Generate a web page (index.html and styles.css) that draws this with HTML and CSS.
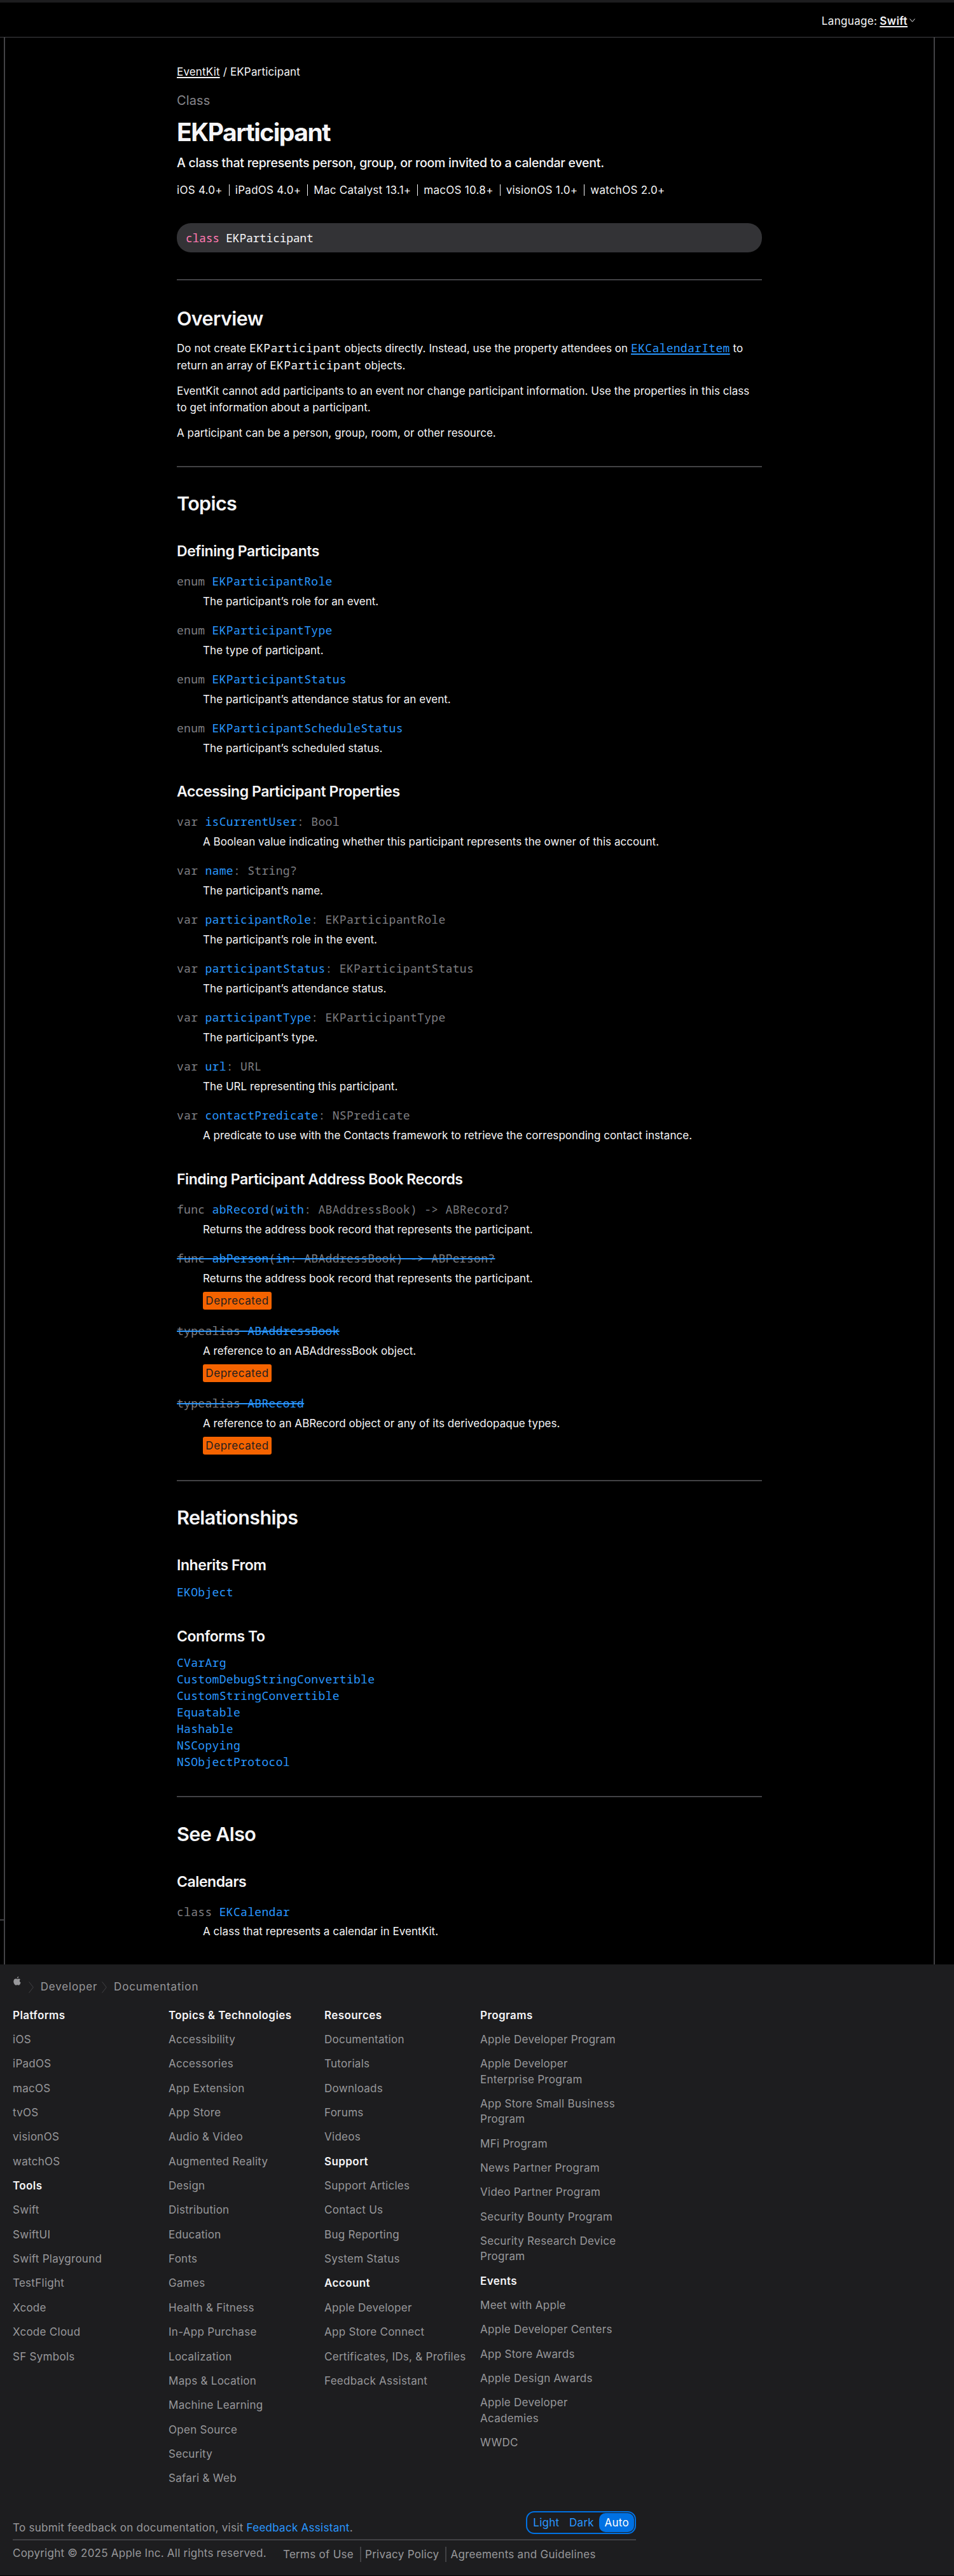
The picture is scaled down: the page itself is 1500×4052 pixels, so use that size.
FILE: index.html
```
<!DOCTYPE html>
<html lang="en">
<head>
<meta charset="utf-8">
<title>EKParticipant | Apple Developer Documentation</title>
<link rel="stylesheet" href="styles.css">
</head>
<body>
<header class="nav">
  <div class="nav-setting">
    <span class="nav-label">Language:</span>
    <a class="nav-value">Swift</a>
    <svg class="nav-chevron" width="9" height="6" viewBox="0 0 9 6"><path d="M.5 .6 4.5 5.2 8.5 .6" fill="none" stroke="#f5f5f7" stroke-width="1"/></svg>
  </div>
</header>

<div class="shell">
  <div class="rail rail-left"><div class="rail-tick"></div></div>
  <main class="doc">
    <nav class="crumbs"><a class="crumb-link">EventKit</a> / EKParticipant</nav>
    <p class="eyebrow">Class</p>
    <h1 class="title">EKParticipant</h1>
    <p class="abstract">A class that represents person, group, or room invited to a calendar event.</p>
    <ul class="platforms">
      <li>iOS 4.0+</li><li>iPadOS 4.0+</li><li>Mac Catalyst 13.1+</li><li>macOS 10.8+</li><li>visionOS 1.0+</li><li>watchOS 2.0+</li>
    </ul>
    <div class="declaration"><span class="keyword">class</span> EKParticipant</div>

    <section class="section section-overview">
      <h2>Overview</h2>
      <div class="prose">
        <p>Do not create <code>EKParticipant</code> objects directly. Instead, use the property attendees on <a class="inline-link"><code>EKCalendarItem</code></a> to<br>return an array of <code>EKParticipant</code> objects.</p>
        <p>EventKit cannot add participants to an event nor change participant information. Use the properties in this class<br>to get information about a participant.</p>
        <p>A participant can be a person, group, room, or other resource.</p>
      </div>
    </section>

    <section class="section section-topics">
      <h2>Topics</h2>
      <div class="group">
        <h3>Defining Participants</h3>
        <div class="symbols">
          <div class="symbol"><div class="sig">enum <a>EKParticipantRole</a></div><p>The participant’s role for an event.</p></div>
          <div class="symbol"><div class="sig">enum <a>EKParticipantType</a></div><p>The type of participant.</p></div>
          <div class="symbol"><div class="sig">enum <a>EKParticipantStatus</a></div><p>The participant’s attendance status for an event.</p></div>
          <div class="symbol"><div class="sig">enum <a>EKParticipantScheduleStatus</a></div><p>The participant’s scheduled status.</p></div>
        </div>
      </div>
      <div class="group group-properties">
        <h3>Accessing Participant Properties</h3>
        <div class="symbols">
          <div class="symbol"><div class="sig">var <a>isCurrentUser</a>: Bool</div><p>A Boolean value indicating whether this participant represents the owner of this account.</p></div>
          <div class="symbol"><div class="sig">var <a>name</a>: String?</div><p>The participant’s name.</p></div>
          <div class="symbol"><div class="sig">var <a>participantRole</a>: EKParticipantRole</div><p>The participant’s role in the event.</p></div>
          <div class="symbol"><div class="sig">var <a>participantStatus</a>: EKParticipantStatus</div><p>The participant’s attendance status.</p></div>
          <div class="symbol"><div class="sig">var <a>participantType</a>: EKParticipantType</div><p>The participant’s type.</p></div>
          <div class="symbol"><div class="sig">var <a>url</a>: URL</div><p>The URL representing this participant.</p></div>
          <div class="symbol"><div class="sig">var <a>contactPredicate</a>: NSPredicate</div><p>A predicate to use with the Contacts framework to retrieve the corresponding contact instance.</p></div>
        </div>
      </div>
      <div class="group">
        <h3>Finding Participant Address Book Records</h3>
        <div class="symbols">
          <div class="symbol"><div class="sig">func <a>abRecord</a>(<a>with</a>: ABAddressBook) -&gt; ABRecord?</div><p>Returns the address book record that represents the participant.</p></div>
          <div class="symbol"><div class="sig"><span class="struck">func <a>abPerson</a>(<a>in</a>: ABAddressBook) -&gt; ABPerson?</span></div><p>Returns the address book record that represents the participant.</p><span class="badge">Deprecated</span></div>
          <div class="symbol"><div class="sig"><span class="struck">typealias <a>ABAddressBook</a></span></div><p>A reference to an ABAddressBook object.</p><span class="badge">Deprecated</span></div>
          <div class="symbol"><div class="sig"><span class="struck">typealias <a>ABRecord</a></span></div><p>A reference to an ABRecord object or any of its derivedopaque types.</p><span class="badge">Deprecated</span></div>
        </div>
      </div>
    </section>

    <section class="section section-relationships">
      <h2>Relationships</h2>
      <div class="group">
        <h3>Inherits From</h3>
        <ul class="relations"><li>EKObject</li></ul>
      </div>
      <div class="group">
        <h3>Conforms To</h3>
        <ul class="relations"><li>CVarArg</li><li>CustomDebugStringConvertible</li><li>CustomStringConvertible</li><li>Equatable</li><li>Hashable</li><li>NSCopying</li><li>NSObjectProtocol</li></ul>
      </div>
    </section>

    <section class="section">
      <h2>See Also</h2>
      <div class="group">
        <h3>Calendars</h3>
        <div class="symbols">
          <div class="symbol"><div class="sig">class <a>EKCalendar</a></div><p>A class that represents a calendar in EventKit.</p></div>
        </div>
      </div>
    </section>
  </main>
  <div class="rail rail-right"></div>
</div>

<footer class="footer">
  <nav class="trail">
    <svg class="trail-logo" width="12" height="14" viewBox="0 0 12 14"><path d="M8.2 0C8.3 1.4 7.2 3 5.8 3 5.7 1.7 6.9 .2 8.2 0ZM10.9 4.8C9.2 6 9.4 8.5 11.6 9.5 10.9 11.6 9.8 13.7 8.6 13.7 7.8 13.7 7.4 13.2 6.3 13.2 5.2 13.2 4.8 13.7 4 13.7 2.4 13.7 .3 10.7 .3 7.8 .3 5.1 2 3.6 3.8 3.6 4.9 3.6 5.6 4.2 6.3 4.2 7 4.2 7.9 3.5 9 3.5 9.8 3.6 10.5 4 10.9 4.8Z" fill="#98989b"/></svg>
    <svg class="trail-chevron" width="8" height="18" viewBox="0 0 8 18"><path d="M.5 .3 7.3 9 .5 17.7" fill="none" stroke="#424245"/></svg>
    <span class="trail-item">Developer</span>
    <svg class="trail-chevron" width="8" height="18" viewBox="0 0 8 18"><path d="M.5 .3 7.3 9 .5 17.7" fill="none" stroke="#424245"/></svg>
    <span class="trail-item">Documentation</span>
  </nav>
  <div class="directory">
    <ul>
      <li class="head">Platforms</li><li>iOS</li><li>iPadOS</li><li>macOS</li><li>tvOS</li><li>visionOS</li><li>watchOS</li>
      <li class="head">Tools</li><li>Swift</li><li>SwiftUI</li><li>Swift Playground</li><li>TestFlight</li><li>Xcode</li><li>Xcode Cloud</li><li>SF Symbols</li>
    </ul>
    <ul>
      <li class="head">Topics &amp; Technologies</li><li>Accessibility</li><li>Accessories</li><li>App Extension</li><li>App Store</li><li>Audio &amp; Video</li><li>Augmented Reality</li><li>Design</li><li>Distribution</li><li>Education</li><li>Fonts</li><li>Games</li><li>Health &amp; Fitness</li><li>In-App Purchase</li><li>Localization</li><li>Maps &amp; Location</li><li>Machine Learning</li><li>Open Source</li><li>Security</li><li>Safari &amp; Web</li>
    </ul>
    <ul>
      <li class="head">Resources</li><li>Documentation</li><li>Tutorials</li><li>Downloads</li><li>Forums</li><li>Videos</li>
      <li class="head">Support</li><li>Support Articles</li><li>Contact Us</li><li>Bug Reporting</li><li>System Status</li>
      <li class="head">Account</li><li>Apple Developer</li><li>App Store Connect</li><li>Certificates, IDs, &amp; Profiles</li><li>Feedback Assistant</li>
    </ul>
    <ul>
      <li class="head">Programs</li><li>Apple Developer Program</li><li>Apple Developer<br>Enterprise Program</li><li>App Store Small Business<br>Program</li><li>MFi Program</li><li>News Partner Program</li><li>Video Partner Program</li><li>Security Bounty Program</li><li>Security Research Device<br>Program</li>
      <li class="head">Events</li><li>Meet with Apple</li><li>Apple Developer Centers</li><li>App Store Awards</li><li>Apple Design Awards</li><li>Apple Developer<br>Academies</li><li>WWDC</li>
    </ul>
  </div>
  <div class="feedback">
    <p>To submit feedback on documentation, visit <a>Feedback Assistant</a>.</p>
    <div class="scheme"><span>Light</span><span>Dark</span><span class="selected">Auto</span></div>
  </div>
  <div class="legal">
    <p class="copyright">Copyright © 2025 Apple Inc. All rights reserved.</p>
    <ul class="legal-links"><li>Terms of Use</li><li>Privacy Policy</li><li>Agreements and Guidelines</li></ul>
  </div>
</footer>
</body>
</html>
```
FILE: styles.css
```
* { box-sizing: border-box; }
body, h1, h2, h3, p, ul { margin: 0; padding: 0; }
ul { list-style: none; }

body {
  height: 4052px;
  background: #000;
  color: #f5f5f7;
  font: 400 17px/26px Inter, "Liberation Sans", sans-serif;
  letter-spacing: .05px;
}

a { color: #2997ff; }
code, .sig, .declaration, .relations {
  font-family: "Noto Sans Mono", "Liberation Mono", monospace;
  font-size: 18px;
  font-weight: 380;
  letter-spacing: .32px;
}
code { line-height: 1; }

/* Top bar */
.nav {
  display: flex;
  justify-content: flex-end;
  height: 59px;
  padding: 16px 61px 0 0;
  border-top: 4px solid #1d1d1f;
  border-bottom: 1px solid #424245;
}
.nav-setting { display: flex; }
.nav-label { margin-right: 4px; letter-spacing: .33px; }
.nav-value {
  color: #f5f5f7;
  font-weight: 600;
  letter-spacing: .4px;
  text-decoration: underline 2px;
  text-underline-offset: 2px;
}
.nav-chevron { margin: 9px 0 0 3px; }

/* Page frame */
.shell { display: flex; height: 3031px; }
.rail-left {
  display: flex;
  flex-direction: column;
  justify-content: flex-end;
  width: 8px;
  padding-bottom: 69px;
  border-right: 2px solid #424245;
}
.rail-tick { height: 2px; background: #424245; }
.rail-right { width: 32px; border-left: 2px solid #424245; }
.doc { flex: 1; padding: 41px 270px 0; }

/* Hero */
.crumbs { letter-spacing: .17px; }
.crumb-link { color: #f5f5f7; text-decoration: underline 2px; text-underline-offset: 2px; }
.eyebrow { margin-top: 19px; color: #86868b; font-size: 20px; letter-spacing: .1px; }
.title { margin-top: 14px; font-size: 39px; line-height: 46px; font-weight: 700; letter-spacing: -1.48px; }
.abstract { margin-top: 11px; font-size: 19.5px; line-height: 28px; font-weight: 500; letter-spacing: -.24px; }
.platforms { display: flex; align-items: center; height: 26px; margin-top: 16px; letter-spacing: .27px; }
.platforms li { display: flex; align-items: center; }
.platforms li + li::before { content: ""; width: 1px; height: 18px; margin: 0 9px 0 10px; background: #f5f5f7; }
.declaration {
  height: 46px;
  margin-top: 39px;
  padding-left: 14px;
  border-radius: 22px;
  background: #333336;
  line-height: 46px;
  letter-spacing: -.25px;
}
.keyword { color: #ff7ab2; }

/* Sections */
.section { margin-top: 40px; padding-top: 37.4px; border-top: 2px solid #424245; }
.section-overview { margin-top: 42px; padding-top: 40.4px; }
.section-topics { margin-top: 38.4px; }
.section-relationships { margin-top: 39.2px; }
h2 { font-size: 30.5px; line-height: 40px; font-weight: 600; letter-spacing: -.6px; }
h3 { font-size: 23px; line-height: 32px; font-weight: 600; letter-spacing: -.43px; }
.prose { display: flex; flex-direction: column; gap: 13.6px; margin-top: 14px; line-height: 26.4px; }
.inline-link { text-decoration: underline 2px; text-underline-offset: 2px; }

.group { margin-top: 40.7px; }
.group-properties { margin-top: 39.3px; }
h2 + .group { margin-top: 39px; }
.symbols { display: flex; flex-direction: column; gap: 19.5px; margin-top: 18px; }
.sig { color: #7e7e82; }
.symbol p { margin: 5.5px 0 0 41px; }
.struck { text-decoration: line-through 2px #2997ff; }
.badge {
  display: block;
  width: 108px;
  height: 28px;
  margin: 8px 0 1px 41px;
  border-radius: 3px;
  background: #f56300;
  color: #1d1d1f;
  line-height: 28px;
  letter-spacing: .55px;
  text-align: center;
}
.relations { margin-top: 13.2px; color: #2997ff; line-height: 25.96px; }

/* Footer */
.footer {
  height: 961px;
  padding: 19px 0 0 20px;
  background: #1d1d1f;
  color: #98989b;
  line-height: 24.28px;
  letter-spacing: .28px;
}
.trail { display: flex; height: 48.5px; }
.trail-logo { margin-left: 1px; }
.trail-chevron { margin: 8px 10.7px 0 12px; }
.trail-item { margin-top: 4.4px; letter-spacing: .85px; }
.trail-item + .trail-chevron { margin-left: 7px; }
.directory { display: grid; grid-template-columns: repeat(4, 245px); height: 792.5px; }
.directory ul { display: flex; flex-direction: column; gap: 14.08px; }
.head { color: #f5f5f7; font-weight: 600; letter-spacing: .42px; }
.feedback {
  display: flex;
  justify-content: space-between;
  width: 980px;
  height: 46px;
  border-bottom: 2px solid #424245;
}
.feedback p { margin-top: 13.6px; }
.scheme {
  display: flex;
  width: 173px;
  height: 36px;
  padding: 1px 1px 1px 2px;
  border: 2px solid #0071e3;
  border-radius: 13px;
  color: #2997ff;
  line-height: 30px;
  text-align: center;
}
.scheme span { width: 56px; }
.scheme .selected { width: 55px; border-radius: 10px; background: #0071e3; color: #fff; }
.legal { display: flex; }
.copyright { width: 425px; margin-top: 8.3px; letter-spacing: .24px; }
.legal-links { display: flex; margin-top: 10px; height: 24px; }
.legal-links li + li { margin-left: 9.5px; padding-left: 6.5px; border-left: 2px solid #424245; }
```
